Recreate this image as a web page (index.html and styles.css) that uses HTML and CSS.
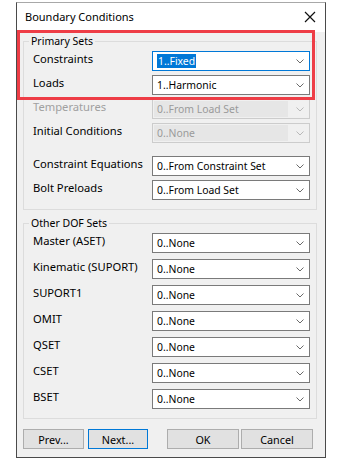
FILE: index.html
```html
<!DOCTYPE html>
<html lang="en">
<head>
    <meta charset="UTF-8">
    <title>Boundary Conditions</title>
    <link rel="stylesheet" href="styles.css">
</head>
<body>
    <div class="dialog">
        <div class="titlebar">
            <span class="title">Boundary Conditions</span>
            <svg class="close" width="12" height="12" viewBox="0 0 12 12">
                <path d="M1 1 L11 11 M11 1 L1 11" stroke="#111" stroke-width="1.2" fill="none"/>
            </svg>
        </div>
        <div class="content">
            <div class="highlight"></div>

            <fieldset class="group group-primary">
                <legend>Primary Sets</legend>
                <div class="row">
                    <span class="label">Constraints</span>
                    <div class="combo focused"><span class="value"><span class="selected">1..Fixed</span></span><svg class="chev" width="8" height="5" viewBox="0 0 8 5"><path d="M0.5 0.5 L4 4 L7.5 0.5" stroke="#6a6a6a" fill="none"/></svg></div>
                </div>
                <div class="row">
                    <span class="label">Loads</span>
                    <div class="combo"><span class="value">1..Harmonic</span><svg class="chev" width="8" height="5" viewBox="0 0 8 5"><path d="M0.5 0.5 L4 4 L7.5 0.5" stroke="#6a6a6a" fill="none"/></svg></div>
                </div>
                <div class="row">
                    <span class="label disabled">Temperatures</span>
                    <div class="combo off"><span class="value">0..From Load Set</span><svg class="chev" width="8" height="5" viewBox="0 0 8 5"><path d="M0.5 0.5 L4 4 L7.5 0.5" stroke="#b8b8b8" fill="none"/></svg></div>
                </div>
                <div class="row">
                    <span class="label">Initial Conditions</span>
                    <div class="combo off"><span class="value">0..None</span><svg class="chev" width="8" height="5" viewBox="0 0 8 5"><path d="M0.5 0.5 L4 4 L7.5 0.5" stroke="#b8b8b8" fill="none"/></svg></div>
                </div>
                <div class="row spaced">
                    <span class="label">Constraint Equations</span>
                    <div class="combo"><span class="value">0..From Constraint Set</span><svg class="chev" width="8" height="5" viewBox="0 0 8 5"><path d="M0.5 0.5 L4 4 L7.5 0.5" stroke="#6a6a6a" fill="none"/></svg></div>
                </div>
                <div class="row">
                    <span class="label">Bolt Preloads</span>
                    <div class="combo"><span class="value">0..From Load Set</span><svg class="chev" width="8" height="5" viewBox="0 0 8 5"><path d="M0.5 0.5 L4 4 L7.5 0.5" stroke="#6a6a6a" fill="none"/></svg></div>
                </div>
            </fieldset>

            <fieldset class="group group-other">
                <legend>Other DOF Sets</legend>
                <div class="row">
                    <span class="label">Master (ASET)</span>
                    <div class="combo"><span class="value">0..None</span><svg class="chev" width="8" height="5" viewBox="0 0 8 5"><path d="M0.5 0.5 L4 4 L7.5 0.5" stroke="#6a6a6a" fill="none"/></svg></div>
                </div>
                <div class="row">
                    <span class="label">Kinematic (SUPORT)</span>
                    <div class="combo"><span class="value">0..None</span><svg class="chev" width="8" height="5" viewBox="0 0 8 5"><path d="M0.5 0.5 L4 4 L7.5 0.5" stroke="#6a6a6a" fill="none"/></svg></div>
                </div>
                <div class="row">
                    <span class="label">SUPORT1</span>
                    <div class="combo"><span class="value">0..None</span><svg class="chev" width="8" height="5" viewBox="0 0 8 5"><path d="M0.5 0.5 L4 4 L7.5 0.5" stroke="#6a6a6a" fill="none"/></svg></div>
                </div>
                <div class="row">
                    <span class="label">OMIT</span>
                    <div class="combo"><span class="value">0..None</span><svg class="chev" width="8" height="5" viewBox="0 0 8 5"><path d="M0.5 0.5 L4 4 L7.5 0.5" stroke="#6a6a6a" fill="none"/></svg></div>
                </div>
                <div class="row">
                    <span class="label">QSET</span>
                    <div class="combo"><span class="value">0..None</span><svg class="chev" width="8" height="5" viewBox="0 0 8 5"><path d="M0.5 0.5 L4 4 L7.5 0.5" stroke="#6a6a6a" fill="none"/></svg></div>
                </div>
                <div class="row">
                    <span class="label">CSET</span>
                    <div class="combo"><span class="value">0..None</span><svg class="chev" width="8" height="5" viewBox="0 0 8 5"><path d="M0.5 0.5 L4 4 L7.5 0.5" stroke="#6a6a6a" fill="none"/></svg></div>
                </div>
                <div class="row">
                    <span class="label">BSET</span>
                    <div class="combo"><span class="value">0..None</span><svg class="chev" width="8" height="5" viewBox="0 0 8 5"><path d="M0.5 0.5 L4 4 L7.5 0.5" stroke="#6a6a6a" fill="none"/></svg></div>
                </div>
            </fieldset>

            <div class="buttons">
                <button class="btn btn-prev">Prev...</button>
                <button class="btn btn-next default">Next...</button>
                <button class="btn btn-ok">OK</button>
                <button class="btn btn-cancel">Cancel</button>
            </div>
        </div>
    </div>
</body>
</html>
```

FILE: styles.css
```css
body {
    margin: 0;
    background: #ffffff;
    font-family: "Noto Sans", "Open Sans", sans-serif;
    font-size: 11px;
    color: #000;
}
.dialog {
    margin: 2px 0 0 16px;
    width: 308px;
    height: 454px;
    border: 1px solid #4a4a4a;
    border-top-color: #a8a8a8;
    background: #f0f0f0;
    display: flex;
    flex-direction: column;
}
.titlebar {
    height: 27px;
    background: #ffffff;
    display: flex;
    align-items: center;
    justify-content: space-between;
    padding: 0 9px 2px 8px;
}
.title {
    font-size: 11px;
}
.close {
    display: block;
}
.content {
    position: relative;
    padding: 0 8px 0 6px;
    flex: 1;
}
.highlight {
    position: absolute;
    left: 0;
    top: -2px;
    width: 298px;
    height: 70px;
    border: 3px solid #ee3d46;
    box-sizing: border-box;
    pointer-events: none;
}
.group {
    border: 1px solid #dcdcdc;
    margin: 0;
    padding: 0 6px 9px 9px;
    display: flex;
    flex-direction: column;
    gap: 4px;
}
.group legend {
    padding: 0 2px;
    margin-left: -4px;
    line-height: 14px;
    font-size: 10.5px;
}
.group-primary {
    margin-top: 2px;
    padding-top: 3px;
}
.group-other {
    margin-top: 6px;
    padding-top: 3px;
    gap: 6px;
}
.row {
    display: flex;
    align-items: center;
    height: 20px;
}
.row.spaced {
    margin-top: 9px;
}
.label {
    width: 119px;
    margin-top: -5px;
    font-size: 11.2px;
}
.label.disabled {
    color: #a0a0a0;
}
.combo {
    flex: 1;
    height: 20px;
    box-sizing: border-box;
    border: 1px solid #7a7a7a;
    background: #ffffff;
    display: flex;
    align-items: center;
    justify-content: space-between;
    padding: 0 5px 0 4px;
    font-size: 10.4px;
}
.combo.focused {
    border-color: #0078d7;
}
.combo.off {
    border-color: #cccccc;
    background: #f0f0f0;
    padding: 1px 5px 1px 1px;
}
.combo.off .value {
    background: #e6e6e6;
    color: #9a9a9a;
    align-self: stretch;
    display: flex;
    align-items: center;
    padding-left: 3px;
    flex: 1;
    margin-right: 8px;
}
.selected {
    background: #0078d7;
    color: #ffffff;
    padding: 0 1px;
}
.chev {
    display: block;
}
.buttons {
    display: flex;
    margin-top: 10px;
}
.btn {
    height: 20px;
    font-family: inherit;
    font-size: 10.8px;
    background: #e1e1e1;
    border: 1px solid #adadad;
    padding: 0;
    color: #000;
}
.btn.default {
    border-color: #0078d7;
}
.btn-prev { width: 61px; }
.btn-next { width: 60px; margin-left: 4px; }
.btn-ok { width: 72px; margin-left: 19px; }
.btn-cancel { width: 72px; margin-left: 2px; }
```
